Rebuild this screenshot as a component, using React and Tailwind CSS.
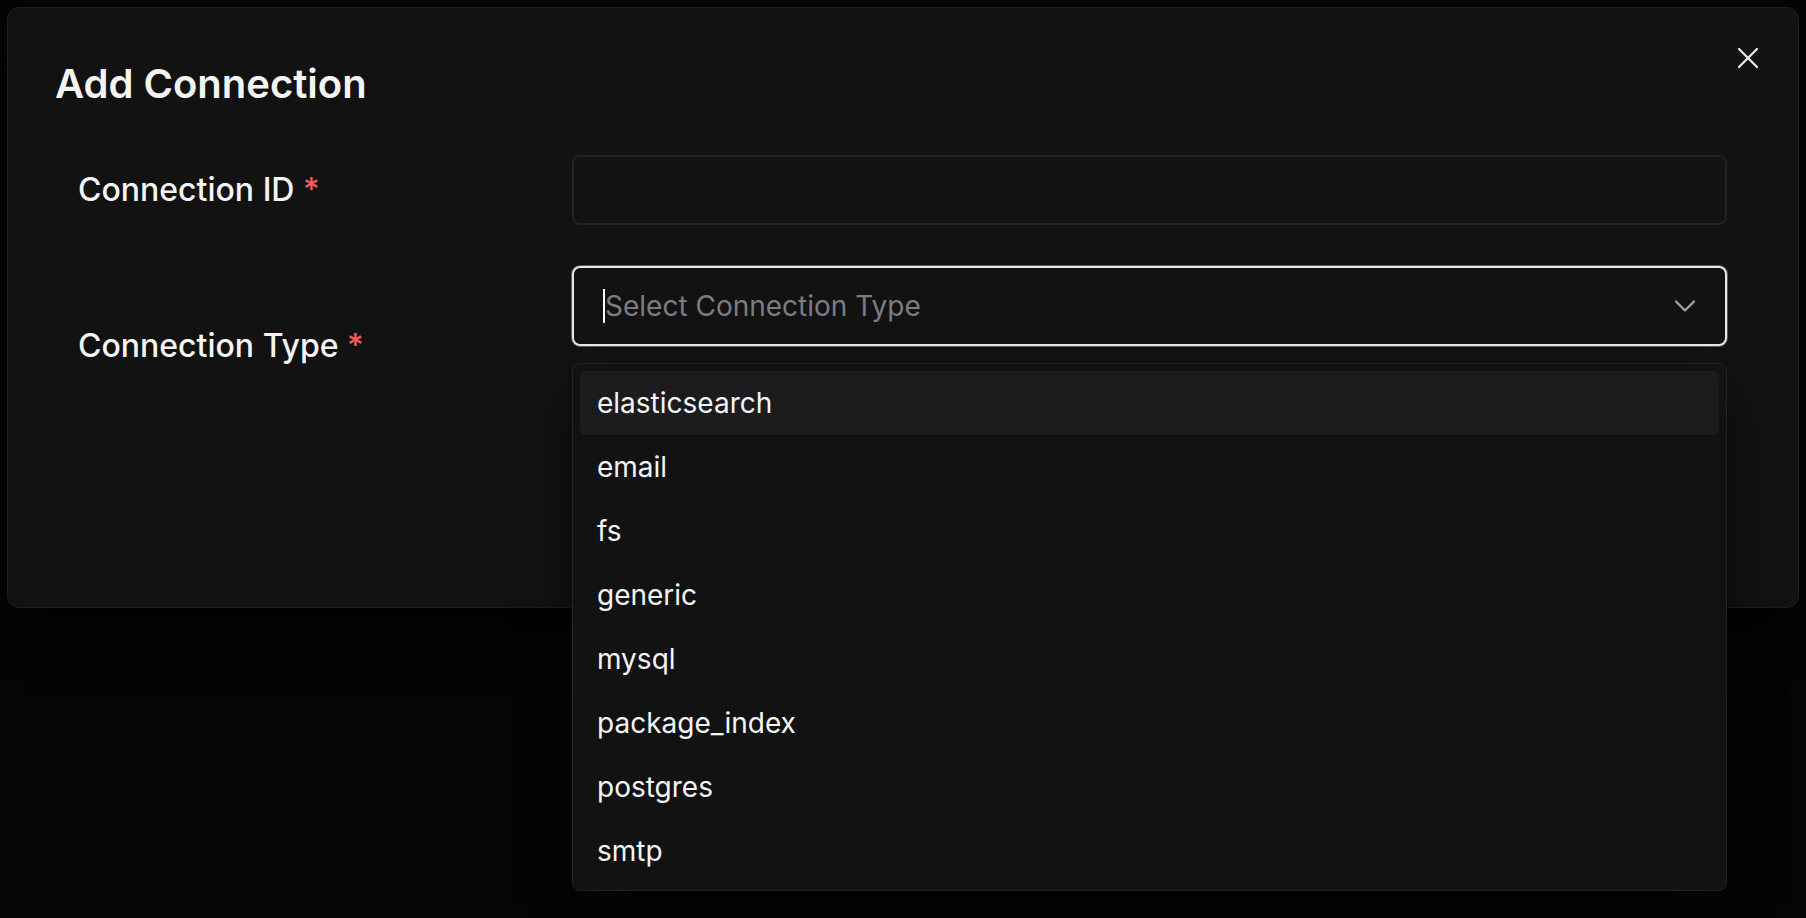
import { X, ChevronDown } from 'lucide-react'

const types = ['elasticsearch', 'email', 'fs', 'generic', 'mysql', 'package_index', 'postgres', 'smtp']

export default function App() {
  return (
    <div className="min-h-screen bg-[#050507] p-[7px] font-['Inter',sans-serif] text-[#f4f4f5]">
      <div className="relative h-[601px] rounded-xl border border-[#1f1f22] bg-[#121212] shadow-2xl shadow-black">
        <button className="absolute right-[32px] top-[32px] text-[#e4e4e7]">
          <X size={36} strokeWidth={1.6} />
        </button>

        <h2 className="pl-[47px] pt-[52px] text-[40px] font-semibold leading-[48px]">
          Add Connection
        </h2>

        <div className="mt-[47px] pl-[70px] pr-[71px]">
          <div className="flex items-center">
            <label className="w-[494px] text-[32px] font-medium leading-[40px]">
              Connection ID <span className="text-[#f25c5c]">*</span>
            </label>
            <div className="h-[70px] flex-1 rounded-lg border-2 border-[#232326] bg-[#121212]" />
          </div>

          <div className="mt-[41px] flex items-start">
            <label className="mt-[60px] w-[494px] text-[32px] font-medium leading-[40px]">
              Connection Type <span className="text-[#f25c5c]">*</span>
            </label>
            <div className="relative flex-1">
              <div className="flex h-[80px] items-center rounded-lg border-2 border-[#e8e8ea] pl-[29px] pr-[22px] ring-1 ring-[#a1a1aa]/50">
                <span className="h-[34px] w-[2px] bg-white" />
                <span className="flex-1 text-[28px] leading-[34px] text-[#7c7c84]">Select Connection Type</span>
                <ChevronDown size={36} strokeWidth={1.5} className="text-[#a1a1aa]" />
              </div>

              <div className="absolute left-0 right-0 top-[calc(100%+17px)] z-10 rounded-lg border border-[#232326] bg-[#121212] p-[7px] shadow-2xl shadow-black">
                {types.map((t, i) => (
                  <div
                    key={t}
                    className={
                      i === 0
                        ? 'flex h-[64px] items-center rounded-md bg-[#1c1c1f] pl-[17px] text-[28px] text-[#f4f4f5]'
                        : 'flex h-[64px] items-center rounded-md pl-[17px] text-[28px] text-[#f4f4f5]'
                    }
                  >
                    {t}
                  </div>
                ))}
              </div>
            </div>
          </div>
        </div>
      </div>
    </div>
  )
}
